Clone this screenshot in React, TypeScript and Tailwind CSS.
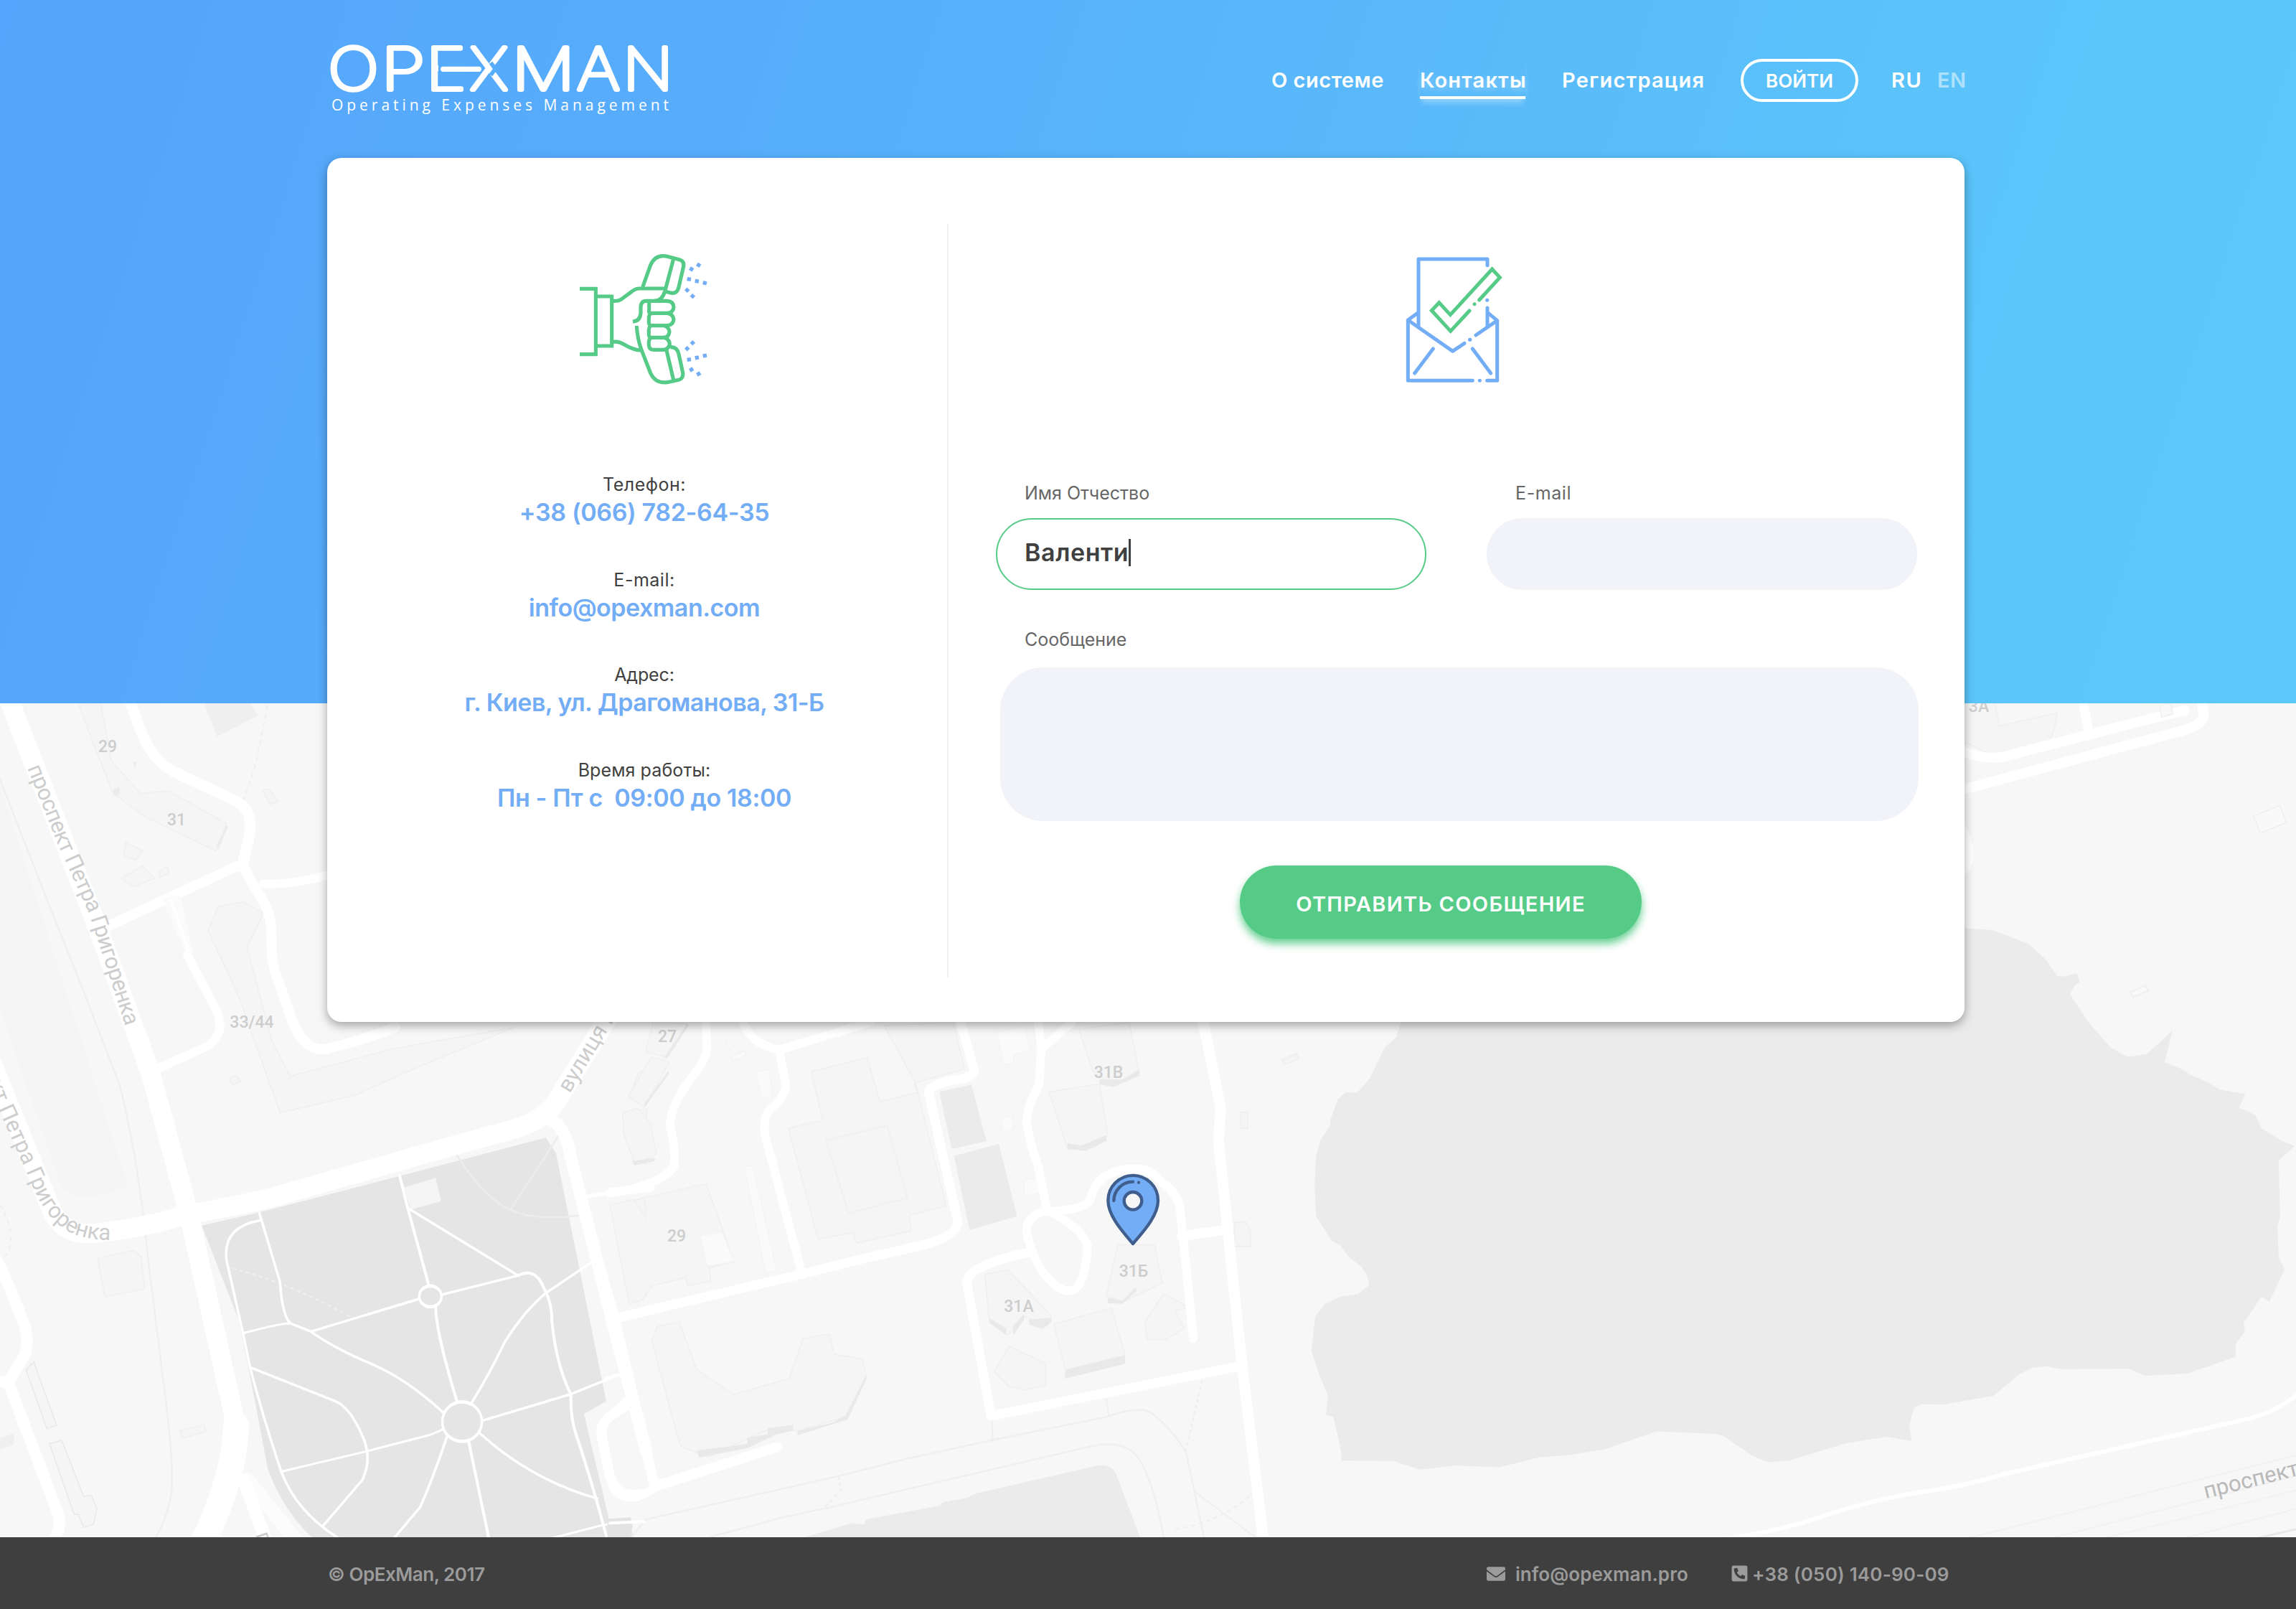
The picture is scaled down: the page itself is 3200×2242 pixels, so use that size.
import type { ReactNode } from "react";
import { FaEnvelope, FaPhoneSquareAlt } from "react-icons/fa";

const GREEN = "#56cb87";
const BLUE = "#72adf6";

type Road = [d: string, width: number, color?: string];

function Roads({ items }: { items: Road[] }) {
  return (
    <g fill="none" strokeLinecap="round" strokeLinejoin="round">
      {items.map(([d, w, c], i) => (
        <path key={i} d={d} strokeWidth={w} stroke={c ?? "#ffffff"} vectorEffect="non-scaling-stroke" />
      ))}
    </g>
  );
}

function Blocks({ items, fill = "#f5f5f5", stroke = "#efefef" }: { items: string[]; fill?: string; stroke?: string }) {
  return (
    <g fill={fill} stroke={stroke} strokeWidth="1.5">
      {items.map((d, i) => (
        <path key={i} d={d} vectorEffect="non-scaling-stroke" />
      ))}
    </g>
  );
}

const westRoads: Road[] = [
  ["M310 10 C340 70 350 110 400 140 C450 165 530 185 585 210 C615 225 610 260 600 285 L588 322", 15],
  ["M262 432 L560 328 Q590 316 600 335 C620 370 650 385 658 430 C662 470 655 480 668 515 L710 605 Q740 660 790 656 Q880 640 960 616", 14],
  ["M640 355 Q720 356 800 338", 12],
  ["M405 386 L430 382 L460 480 Z", 10, "#fbfbfb"],
  ["M416 385 L458 478", 4],
  ["M455 484 L525 585 Q550 625 505 650 L380 692", 12],
  ["M22 20 L235 430 L366 700 L460 960 L573 1340", 27],
  ["M573 1340 Q572 1430 490 1560", 36],
  ["M600 1440 L740 1570", 20, "#fcfcfc"],
  ["M592 1440 L650 1560", 18],
  ["M-20 680 L120 940 Q145 990 210 992 Q330 985 440 960 L640 930 L1080 836 L1240 803 Q1330 785 1360 740 L1500 570", 27],
  ["M1340 785 Q1375 800 1385 850 L1500 1190 L1570 1390", 17],
  ["M-10 1040 Q10 1060 60 1160 Q75 1200 50 1225 L20 1262 L-20 1262", 16],
  ["M20 1262 L140 1500 Q155 1530 120 1560", 16],
  ["M1425 925 L1485 916", 5],
  ["M1485 916 L1580 908", 12],
  ["M1500 1146 L1580 1132", 11],
  ["M1530 1300 L1480 1325 Q1455 1340 1462 1365 L1480 1430 Q1495 1475 1560 1466", 14],
];

const parkPaths: Road[] = [
  ["M630 955 L680 1080 Q685 1140 705 1155 L755 1170 L1020 1110", 3.5],
  ["M630 968 Q540 980 550 1040 L590 1173 L607 1235 Q640 1330 683 1425 Q720 1500 830 1550", 3.5],
  ["M590 1173 Q680 1155 705 1155", 3],
  ["M755 1170 Q800 1195 880 1222 Q980 1250 1080 1320", 3.5],
  ["M607 1235 L815 1297 Q850 1308 880 1360 Q905 1400 880 1440 L785 1523", 3.5],
  ["M683 1425 L890 1388 L1045 1358 L1085 1345", 3],
  ["M970 885 L990 945 L1042 1088", 4],
  ["M990 945 L1258 1068 L1072 1103", 3.5],
  ["M1258 1068 Q1300 1052 1320 1090 Q1340 1115 1340 1150 Q1350 1230 1386 1284 Q1385 1330 1400 1360 Q1440 1450 1475 1550", 4],
  ["M1440 1042 L1325 1100 Q1270 1135 1225 1190 Q1190 1245 1145 1300", 3.5],
  ["M1058 1125 Q1058 1170 1110 1298", 4],
  ["M1172 1332 L1386 1284 L1505 1248", 3.5],
  ["M1165 1355 Q1290 1440 1450 1474", 3.5],
  ["M1085 1362 Q1050 1440 1020 1490 Q980 1525 955 1548", 3.5],
  ["M1138 1370 L1188 1550", 4],
  ["M1320 1550 L1465 1522 L1560 1516", 3],
];

const centerRoads: Road[] = [
  ["M210 40 L212 130 Q210 160 170 225 Q130 300 132 350 Q145 420 140 465 Q110 520 0 542", 12],
  ["M290 40 Q300 110 370 130 L570 50", 12],
  ["M370 130 L385 235 Q380 270 350 300 Q332 330 340 380 L418 765", 12],
  ["M765 40 L796 190 Q795 208 760 215 Q690 230 698 260 L720 390 L760 620 Q762 660 700 685 Q640 705 560 728 L418 775 L10 902", 13],
  ["M935 40 L943 120 L938 230 Q905 310 912 350 Q925 430 935 460 L955 590", 12],
  ["M1010 50 L945 125", 12],
  ["M955 595 Q1040 590 1050 560 Q1060 490 1120 475 Q1180 460 1205 510 Q1245 540 1248 610 L1275 960", 12],
  ["M955 590 Q905 610 912 660 Q925 740 960 790 Q1005 850 1028 800 Q1045 740 1043 690 Q1030 640 955 590", 12],
  ["M915 712 Q780 750 780 800 L833 1182 L1380 1038", 13],
  ["M1295 40 L1335 300 L1330 390 L1380 1020 L1432 1580", 15],
  ["M1250 665 L1340 648", 14],
  ["M-20 760 L10 900 L95 1370 L110 1380 L365 1272", 14],
  ["M5 1385 Q25 1425 60 1415 Q90 1400 110 1375", 12],
  ["M-10 1075 L25 1062", 4],
  ["M-10 1190 L45 1130", 10],
  ["M0 1490 L75 1486", 4],
];

const centerLines: Road[] = [
  ["M48 1530 L78 1480 L500 1355 L640 1308 L835 1252 L1085 1185 Q1160 1150 1185 1175 Q1230 1220 1260 1290 L1298 1530", 2.5, "#efefef"],
  ["M220 1530 L380 1473 L480 1445 L1050 1270 Q1120 1250 1150 1295 Q1185 1350 1210 1530", 2.5, "#efefef"],
  ["M835 1195 L837 1252 M1085 1133 L1090 1183 M1278 1400 L1410 1530", 2, "#efefef"],
];

const westBuildings = [
  "M190 26 L245 26 L270 130 L340 190 L410 186 L550 245 L525 295 L350 232 L275 190 L232 110 Z",
  "M530 396 L590 388 L640 408 L600 470 L660 640 L705 705 L955 655 L1250 616 L1010 690 L860 740 L680 772 L580 560 L505 440 Z",
  "M305 280 L348 295 L328 312 L300 303 Z M295 345 L345 322 L375 345 L325 360 Z M385 332 L406 324 L411 334 L390 343 Z",
  "M237 1037 L325 1022 L343 1034 L351 1092 L255 1107 Z",
  "M436 1350 L495 1340 L500 1352 L442 1364 Z",
  "M556 710 L574 703 L584 714 L566 722 Z M638 184 L655 183 L675 205 L655 210 Z",
  "M1482 942 L1570 925 L1570 1105 L1528 1118 Z",
  "M1515 770 L1570 765 L1570 865 L1545 858 Z M1550 700 L1570 690 L1570 758 L1527 745 Z",
];

const centerBuildings = [
  "M95 50 L170 55 L120 150 L78 135 Z M90 150 L130 165 L75 295 L40 265 Z M28 310 L60 298 L88 340 L102 430 L55 460 L30 370 Z",
  "M0 575 L52 560 L80 615 L75 555 L210 515 L245 640 L272 740 L218 755 L220 795 L170 808 L165 785 L92 808 L70 850 L42 860 Z",
  "M440 192 L562 152 L590 278 L672 252 L665 225 L775 185 L750 50 L600 60 L668 225 L735 578 L655 605 L658 650 L540 685 L530 655 L455 674 L390 355 L465 332 Z",
  "M472 390 L606 347 L650 555 L522 600 Z",
  "M1025 70 L1135 50 L1157 195 L1100 235 L1055 190 Z",
  "M960 250 L1070 228 L1088 375 L1060 410 L1000 415 Z",
  "M1110 690 L1190 690 L1207 800 L1120 855 L1085 835 Z",
  "M820 775 L870 762 L965 895 L955 925 L905 895 L870 950 L828 900 Z",
  "M970 918 L1096 872 L1126 1008 L995 1050 Z",
  "M1210 830 L1266 870 L1235 880 L1255 930 L1215 963 L1175 963 L1168 915 Z",
  "M872 982 L952 1030 L952 1095 L905 1108 L870 1095 L840 1055 Z",
  "M103 925 L152 912 L190 1050 L270 1120 L392 1075 L422 960 L480 946 L490 1005 L552 1018 L560 1070 L515 1185 L410 1225 L345 1222 L215 1300 L155 1270 L135 1180 L92 965 Z",
  "M1472 160 L1500 142 L1504 156 L1475 172 Z M1378 310 L1394 308 L1394 356 L1378 356 Z M1365 626 L1390 624 L1400 650 L1400 695 L1365 695 Z",
];

const centerLight = [
  "M294 465 L312 462 L365 765 L340 770 Z M318 192 L348 185 L355 262 L332 268 Z M198 665 L245 652 L272 738 L212 752 Z",
  "M250 95 L270 120 L262 125 Z M265 150 L295 132 L298 145 L268 162 Z M845 80 L905 60 L920 132 L885 142 L880 172 L860 170 Z M855 325 L880 318 L882 360 L858 366 Z M905 505 L935 498 L945 540 L905 552 Z",
];

const centerShadows = [
  "M995 1050 L1126 1008 L1126 1032 L995 1075 Z",
  "M190 1282 L300 1262 L300 1245 L345 1235 L345 1218 L400 1208 L400 1225 L365 1235 L300 1275 L195 1302 Z M410 1225 L490 1200 L515 1180 L560 1065 L560 1078 L520 1192 L410 1238 Z",
  "M1000 398 L1030 405 L1085 375 L1085 392 L1040 420 L1000 415 Z M1070 215 L1120 215 L1157 185 L1157 204 L1100 237 L1070 228 Z",
  "M1088 842 L1120 850 L1150 812 L1150 825 L1120 860 L1088 858 Z M828 900 L866 930 L866 950 L830 915 Z M880 925 L905 890 L905 905 L882 950 Z M915 905 L965 900 L965 912 L945 932 L918 920 Z",
  "M120 150 L168 55 L172 60 L125 155 Z M75 285 L128 190 L128 200 L75 296 Z M50 450 L98 440 L98 450 L52 462 Z",
];

const label = "fill-[#cdcdcd]";

function MapLayer() {
  return (
    <svg className="block h-[1162px] w-[3200px] bg-[#f7f7f7] font-['Roboto',sans-serif]" viewBox="0 980 3200 1162">
      <g transform="translate(1750 1250) scale(.92474 .57398)">
        <path
          fill="#ebebeb"
          d="M222 290 L212 340 L195 364 L172 440 L153 475 L136 474 L124 490 L113 540 L112 555 L98 590 L91 630 L89 700 L91 775 L115 835 L127 845 L140 873 L160 898 L168 918 L171 943 L154 964 L128 970 L105 987 L90 1018 L84 1100 L96 1160 L109 1210 L106 1257 L117 1262 L129 1345 L129 1368 L207 1369 L248 1390 L302 1380 L368 1384 L428 1360 L470 1355 L527 1340 L604 1297 L690 1303 L704 1307 L747 1355 L772 1372 L804 1368 L890 1326 L952 1310 L989 1321 L985 1285 L992 1240 L1004 1231 L1035 1232 L1112 1211 L1150 1160 L1170 1143 L1190 1139 L1215 1146 L1317 1145 L1340 1162 L1404 1157 L1477 1116 L1477 1085 L1491 1054 L1489 1034 L1516 970 L1528 982 L1551 903 L1542 876 L1540 800 L1544 775 L1542 640 L1566 604 L1545 590 L1516 562 L1507 529 L1482 511 L1492 478 L1454 468 L1435 450 L1410 432 L1395 417 L1370 401 L1382 324 L1343 381 L1314 388 L1288 364 L1255 303 L1227 235 L1234 216 L1242 206 L1238 185 L1218 193 L1208 191 L1190 150 L1164 113 L1110 80 L1060 74 L1000 200 Z"
        />
        <Blocks items={["M1318 230 L1342 215 L1345 228 L1322 243 Z M40 393 L62 379 L65 392 L43 407 Z"]} fill="#f9f9f9" />
        <Roads
          items={[
            ["M1065 1560 L1580 1350 M1190 1560 L1580 1400 M1270 1560 L1580 1435 M1390 1560 L1580 1480", 2, "#f1f1f1"],
            ["M1500 1560 L1580 1530", 3, "#e8e8e8"],
            ["M700 1560 Q790 1540 860 1500 Q940 1460 1000 1445 Q1070 1430 1130 1400 L1500 1265 Q1545 1245 1575 1200", 6],
          ]}
        />
      </g>

      <g transform="translate(2700 900) scale(.33333)">
        <Blocks items={["M110 230 L240 230 L260 335 L500 280 L495 330 L470 395 L245 465 L110 400 Z"]} />
        <Roads
          items={[
            ["M100 435 Q170 475 270 465 L900 302 L1035 270", 14],
            ["M608 230 L635 360", 13],
            ["M90 605 L1040 350 Q1120 325 1113 280 L1105 220", 14],
            ["M90 740 Q145 860 128 900 Q120 935 90 945", 14],
          ]}
        />
        <Blocks items={["M1322 712 L1432 668 L1460 738 L1352 782 Z M810 1448 L868 1420 L880 1440 L820 1468 Z"]} fill="#f9f9f9" />
        <Blocks items={["M930 250 L975 240 L985 285 L938 298 Z"]} fill="#f9f9f9" />
      </g>

      <g transform="translate(0 960) scale(.57398 .76531)">
        <path fill="#f4f4f4" d="M-10 150 L310 905 Q200 940 150 910 L-10 560 Z" opacity=".6" />
        <path fill="#efefef" d="M495 26 L608 26 L627 48 L527 87 Z M0 1364 L34 1355 L34 1376 L0 1385 Z" />
        <Blocks items={westBuildings} />
        <Blocks items={["M63 1240 L82 1225 L137 1340 L114 1347 Z M120 1374 L150 1368 L203 1470 L222 1468 L235 1492 L228 1520 L203 1527 L190 1503 L180 1503 Z"]} stroke="#e9e9e9" />
        <path fill="#ebebeb" d="M526 285 L550 248 L553 252 L530 292 Z M275 182 L290 180 L290 192 L277 193 Z M322 133 L330 133 L330 146 Z" />
        <path
          fill="#e5e5e5"
          d="M490 977 L630 953 L970 887 L1325 817 L1350 845 L1472 1297 L1418 1320 L1480 1515 L1530 1510 L1538 1550 L765 1550 Q690 1500 650 1420 L620 1300 L580 1150 Z"
        />
        <path fill="#f5f5f5" stroke="#ececec" d="M980 908 L1058 890 L1071 933 L997 948 Z" />
        <Roads
          items={[
            ["M0 165 Q60 280 115 385 L200 545 L290 720 Q335 850 360 1040 L400 1280 Q425 1430 415 1470 Q405 1510 375 1550", 2.5, "#efefef"],
            ["M1110 850 Q1180 930 1240 948 Q1300 970 1408 958 M1240 948 L1355 815", 2.5, "#ececec"],
          ]}
        />
        <g fill="none" stroke="#eeeeee" strokeWidth="3" strokeDasharray="9 7">
          <path d="M650 30 L620 140 L590 205" />
          <path d="M0 940 Q50 1000 5 1042" />
          <path d="M550 1052 Q700 1080 850 1143" stroke="#efefef" />
        </g>
        <Roads items={parkPaths} />
        <g fill="#e5e5e5" stroke="#ffffff" strokeWidth="6">
          <ellipse cx="1045" cy="1106" rx="27" ry="19" />
          <ellipse cx="1122" cy="1334" rx="48" ry="36" />
        </g>
        <Roads items={westRoads} />
      </g>

      <g transform="translate(850 1400) scale(.63776 .48469)">
        <path fill="#ebebeb" d="M720 250 L790 230 L823 392 L747 415 Z M752 435 L850 400 L890 608 L786 648 Z" />
        <path fill="#ebebeb" d="M415 1535 L530 1490 L555 1495 L560 1480 L720 1440 L728 1430 L780 1418 L800 1405 L1065 1325 Q1095 1320 1105 1345 L1160 1535 Z" />
        <path fill="#e3e3e3" d="M-5 1478 L45 1474 L50 1500 L38 1535 L-5 1535 Z" />
        <Roads items={centerLines} />
        <g fill="none" stroke="#efefef" strokeWidth="4" strokeDasharray="10 8">
          <path d="M1294 1080 L1258 1285" />
          <path d="M1235 1508 Q1330 1490 1405 1405" />
          <path d="M500 1355 L505 1395 L470 1445" />
        </g>
        <Blocks items={centerBuildings} />
        <Blocks items={centerLight} fill="#fafafa" stroke="#f4f4f4" />
        <g fill="#e9e9e9">
          {centerShadows.map((d, i) => (
            <path key={i} d={d} />
          ))}
        </g>
        <Roads items={centerRoads} />
      </g>

      <g fontSize="23" fontWeight="500" textAnchor="middle" className={label}>
        <text x="150" y="1048">29</text>
        <text x="246" y="1150">31</text>
        <text x="351" y="1432">33/44</text>
        <text x="930" y="1452">27</text>
        <text x="943" y="1730">29</text>
        <text x="1545" y="1502">31В</text>
        <text x="1580" y="1779">31Б</text>
        <text x="1420" y="1828">31А</text>
        <text x="2758" y="992">3А</text>
      </g>
      <defs>
        <path id="avenue" d="M38 1070 L82 1180 L124 1272 L178 1440" />
        <path id="avenue-bend" d="M-110 1270 L0 1550 L40 1640 Q64 1704 104 1720 Q128 1728 154 1728" />
      </defs>
      <g fontSize="31" className={label}>
        <text textLength="386">
          <textPath href="#avenue">проспект Петра Григоренка</textPath>
        </text>
        <text textAnchor="end">
          <textPath href="#avenue-bend" startOffset="100%">проспект Петра Григоренка</textPath>
        </text>
        <text transform="translate(794 1524) rotate(-59)">вулиця П</text>
        <text transform="translate(356 2138) rotate(72)">п</text>
      </g>
      <text transform="translate(3074 2088) rotate(-14)" fontSize="31" className="fill-[#b9b9b9]">
        проспект
      </text>

      {/* office location pin */}
      <g transform="translate(1500 1600) scale(.33333)" stroke="#405e8d" strokeWidth="13" strokeLinecap="round" strokeLinejoin="round">
        <path fill={BLUE} d="M237 399 C200 355 133 285 133 218 A104 104 0 0 1 342 218 C342 285 274 355 237 399 Z" />
        <circle cx="237" cy="220" r="37" fill="#f7f7f7" />
        <path fill="none" d="M157 219 A80 80 0 0 1 237 140" />
        <circle cx="261" cy="143" r="6.5" fill="#405e8d" stroke="none" />
      </g>
    </svg>
  );
}

function Logo() {
  const letters: [string, number, number][] = [
    ["O", 457.2, 1.162],
    ["P", 531.2, 1.238],
    ["E", 593.8, 1.173],
    ["X", 655.2, 1.043],
    ["M", 713.4, 1.205],
    ["A", 804.3, 1.146],
    ["N", 868.3, 1.112],
  ];
  return (
    <svg className="h-[120px] w-[500px] shrink-0" viewBox="456 50 500 120" aria-label="Opexman">
      <g fill="#fff" stroke="#fff" strokeWidth="6" strokeLinejoin="round" fontWeight="100" fontSize="81.2">
        {letters.map(([ch, x, sx]) => (
          <text key={ch} transform={`translate(${x} 125.4) scale(${sx} 1)`}>
            {ch}
          </text>
        ))}
      </g>
      {/* arrow running from the E into the X */}
      <g transform="translate(440 40) scale(.33333)" fill="none">
        <path d="M732 142 L751 168 L732 194" stroke="#56adfb" strokeWidth="17" />
        <path d="M513 168 L632 168" stroke="#56acfb" strokeWidth="50" />
        <path d="M533 169 L682 169" stroke="#fff" strokeWidth="22" strokeLinecap="round" />
      </g>
      <text x="462" y="154.4" fontSize="21" fontWeight="400" textLength="470" fill="#fff" className="font-['Open_Sans',sans-serif]">
        Operating Expenses Management
      </text>
    </svg>
  );
}

function HandsetIcon() {
  const sparks = [
    [551, 135, 30], [581, 118, 30], [541, 177, 8], [574, 185, 8], [607, 193, 14], [533, 223, 42], [556, 248, 42],
    [533, 467, 45], [556, 443, 45], [541, 513, -8], [574, 505, -10], [607, 497, -10], [551, 555, -30], [581, 573, -30],
  ];
  return (
    <svg className="h-[230px] w-[240px]" viewBox="-6 0 720 690" fill="none" stroke={GREEN} strokeWidth="15.5" strokeLinejoin="round">
      <path strokeLinejoin="miter" d="M84 217 H151 V491 H84 M151 249 H218 V456 H151" />
      <path d="M224 268 Q248 270 262 258 L300 230 Q316 216 335 216 H440" />
      <path d="M224 439 Q246 436 268 449 Q310 474 341 474" />
      <path d="M347 210 L380 118 Q402 68 455 83 L500 95 Q524 102 517 128 L497 214 Q490 238 467 235 L442 229" />
      <path d="M476 92 L440 228 Q428 268 396 268 H358 Q338 270 339 300 V318 Q337 352 306 354" />
      <path d="M374 275 V303 Q371 320 381 319 Q371 330 373 345 Q371 370 381 371 Q371 380 373 398 Q371 420 381 422 Q371 430 373 452 Q374 472 392 472 H436 Q456 470 460 448 Q458 425 436 421 H381" />
      <path d="M396 268 H450 Q476 270 477 294 Q474 318 450 319 H381 M450 319 Q474 322 477 345 Q474 369 450 371 H381 M436 371 Q457 376 459 397 Q456 420 436 421" />
      <path d="M322 372 Q324 420 341 470 L380 570 Q400 614 450 608 L498 598 Q518 592 515 568 L498 490 Q490 458 462 461 M447 475 L476 598" />
      <g fill={BLUE} stroke="none">
        {sparks.map(([x, y, r], i) => (
          <rect key={i} x={x - 8} y={y - 8} width="16" height="16" transform={`rotate(${r} ${x} ${y})`} />
        ))}
      </g>
    </svg>
  );
}

function EnvelopeIcon() {
  return (
    <svg className="ml-[608px] h-[230px] w-[190px]" viewBox="0 0 570 690" fill="none" stroke={BLUE} strokeWidth="15" strokeLinecap="round" strokeLinejoin="round">
      <path d="M141 374 V93 H429 V119" />
      <path d="M429 297 V374" />
      <path d="M137 319 L97 348 V601 H367 M97 348 L284 478 L333 445 M381 411 L470 350 L433 319 M470 350 V601 H428" />
      <path d="M202 468 L125 570 M367 468 L443 570" />
      <g fill={BLUE} stroke="none">
        <circle cx="428" cy="265" r="7.5" />
        <circle cx="356" cy="430" r="8" />
        <circle cx="397" cy="601" r="7.5" />
      </g>
      <path stroke={GREEN} strokeLinejoin="miter" d="M395 264 L481 170 L449 135 L274 326 L227 275 L196 308 L275 394 L354 309" />
      <circle cx="375" cy="281" r="7.5" fill={GREEN} stroke="none" />
    </svg>
  );
}

function NavItem({ className, children }: { className: string; children: ReactNode }) {
  return <a className={`block h-[60px] shrink-0 leading-[60px] whitespace-nowrap ${className}`}>{children}</a>;
}

function Contact({ title, titleClass, value, valueClass }: { title: string; titleClass: string; value: string; valueClass: string }) {
  return (
    <div className="text-center whitespace-pre">
      <div className={`text-[25px] leading-[34px] text-[#404040] ${titleClass}`}>{title}</div>
      <div className={`text-[34px] leading-[44px] font-semibold text-[#72adf6] ${valueClass}`}>{value}</div>
    </div>
  );
}

export default function App() {
  return (
    <div className="relative flex h-[2242px] w-[3200px] flex-col overflow-hidden font-['Inter',sans-serif]">
      <div className="absolute inset-x-0 top-0">
        <div className="h-[980px] bg-[linear-gradient(108deg,#55a4fb_0%,#57aefb_33%,#5bc3fa_78%,#5cc9fa_100%)]" />
        <MapLayer />
      </div>

      <header className="relative flex h-[220px] items-start pl-[456px] text-[29px] font-semibold text-white">
        <div className="mt-[50px] flex">
          <Logo />
        </div>
        <nav className="mt-[82px] ml-[816px] flex">
          <NavItem className="w-[207px] tracking-[0.5px]">О системе</NavItem>
          <NavItem className="w-[198px] tracking-[1.2px]">
            <span className="inline-block h-[56px] w-[147px] border-b-4 border-white shadow-[0_8px_8px_-3px_rgba(255,255,255,0.35)] [text-shadow:0_4px_8px_rgba(255,255,255,0.3)]">
              Контакты
            </span>
          </NavItem>
          <NavItem className="w-[249px] tracking-[1.2px]">Регистрация</NavItem>
          <button className="mr-[46px] h-[60px] w-[164px] rounded-full border-4 border-white text-[26px]">ВОЙТИ</button>
          <NavItem className="w-[64px] tracking-[1.5px]">RU</NavItem>
          <NavItem className="tracking-[0.4px] text-white/50">EN</NavItem>
        </nav>
      </header>

      <main className="relative ml-[456px] flex h-[1204px] w-[2282px] rounded-[20px] bg-white shadow-[0_5px_14px_rgba(0,0,0,0.35)]">
        <section className="flex w-[864px] flex-col items-center pt-[110px] pl-[20px]">
          <HandsetIcon />
          <div className="mt-[98px] flex flex-col gap-[54.6px]">
            <Contact title="Телефон:" titleClass="tracking-[0.5px]" value="+38 (066) 782-64-35" valueClass="tracking-[-0.36px]" />
            <Contact title="E-mail:" titleClass="tracking-[0.5px]" value="info@opexman.com" valueClass="tracking-[-0.5px]" />
            <Contact title="Адрес:" titleClass="tracking-[-0.1px]" value="г. Киев, ул. Драгоманова, 31-Б" valueClass="tracking-[-0.54px]" />
            <Contact title="Время работы:" titleClass="tracking-[0.1px]" value="Пн - Пт с  09:00 до 18:00" valueClass="tracking-[-0.36px]" />
          </div>
        </section>

        <div className="mt-[92px] h-[1050px] w-[2px] bg-[#f2f2f2]" />

        <form className="pt-[110px] text-[25px] leading-[36px] text-[#666666]">
          <EnvelopeIcon />
          <div className="mt-[109px] ml-[66px] flex gap-[84px]">
            <div className="w-[600px]">
              <div className="mb-[17px] pl-[40px]">Имя Отчество</div>
              <div className="flex h-[100px] items-center rounded-full border-2 border-[#56cb87] pb-[4px] pl-[38px] text-[34px] font-semibold tracking-[0.6px] text-[#404040]">
                Валенти
                <span className="h-[38px] w-[3px] bg-[#404040]" />
              </div>
            </div>
            <div className="w-[600px]">
              <div className="mb-[17px] pl-[40px] tracking-[0.6px]">E-mail</div>
              <div className="h-[100px] rounded-full bg-[#f1f3f8]" />
            </div>
          </div>
          <div className="mt-[51px] ml-[66px] pl-[40px]">Сообщение</div>
          <div className="mt-[21px] ml-[72px] h-[214px] w-[1280px] rounded-[60px] bg-[#f1f3f8]" />
          <button className="mt-[62px] ml-[406px] block h-[102px] w-[560px] rounded-full bg-[#56cb87] pt-[5px] text-[29px] font-semibold tracking-[1.3px] text-white shadow-[0_7px_12px_rgba(86,203,135,0.9)]">
            ОТПРАВИТЬ СООБЩЕНИЕ
          </button>
        </form>
      </main>

      <footer className="relative mt-auto flex h-[100px] items-center bg-[#3f3f3f] pl-[457px] text-[26px] font-semibold text-[#9b9b9b]">
        <span className="w-[1615px] pt-[2px] tracking-[-0.47px]">© OpExMan, 2017</span>
        <FaEnvelope className="mt-[2px] mr-[14px] size-[26px]" />
        <span className="w-[300px] pt-[2px] tracking-[0.05px]">info@opexman.pro</span>
        <FaPhoneSquareAlt className="mr-[5px] size-[25px]" />
        <span className="pt-[2px] tracking-[0.2px]">+38 (050) 140-90-09</span>
      </footer>
    </div>
  );
}
